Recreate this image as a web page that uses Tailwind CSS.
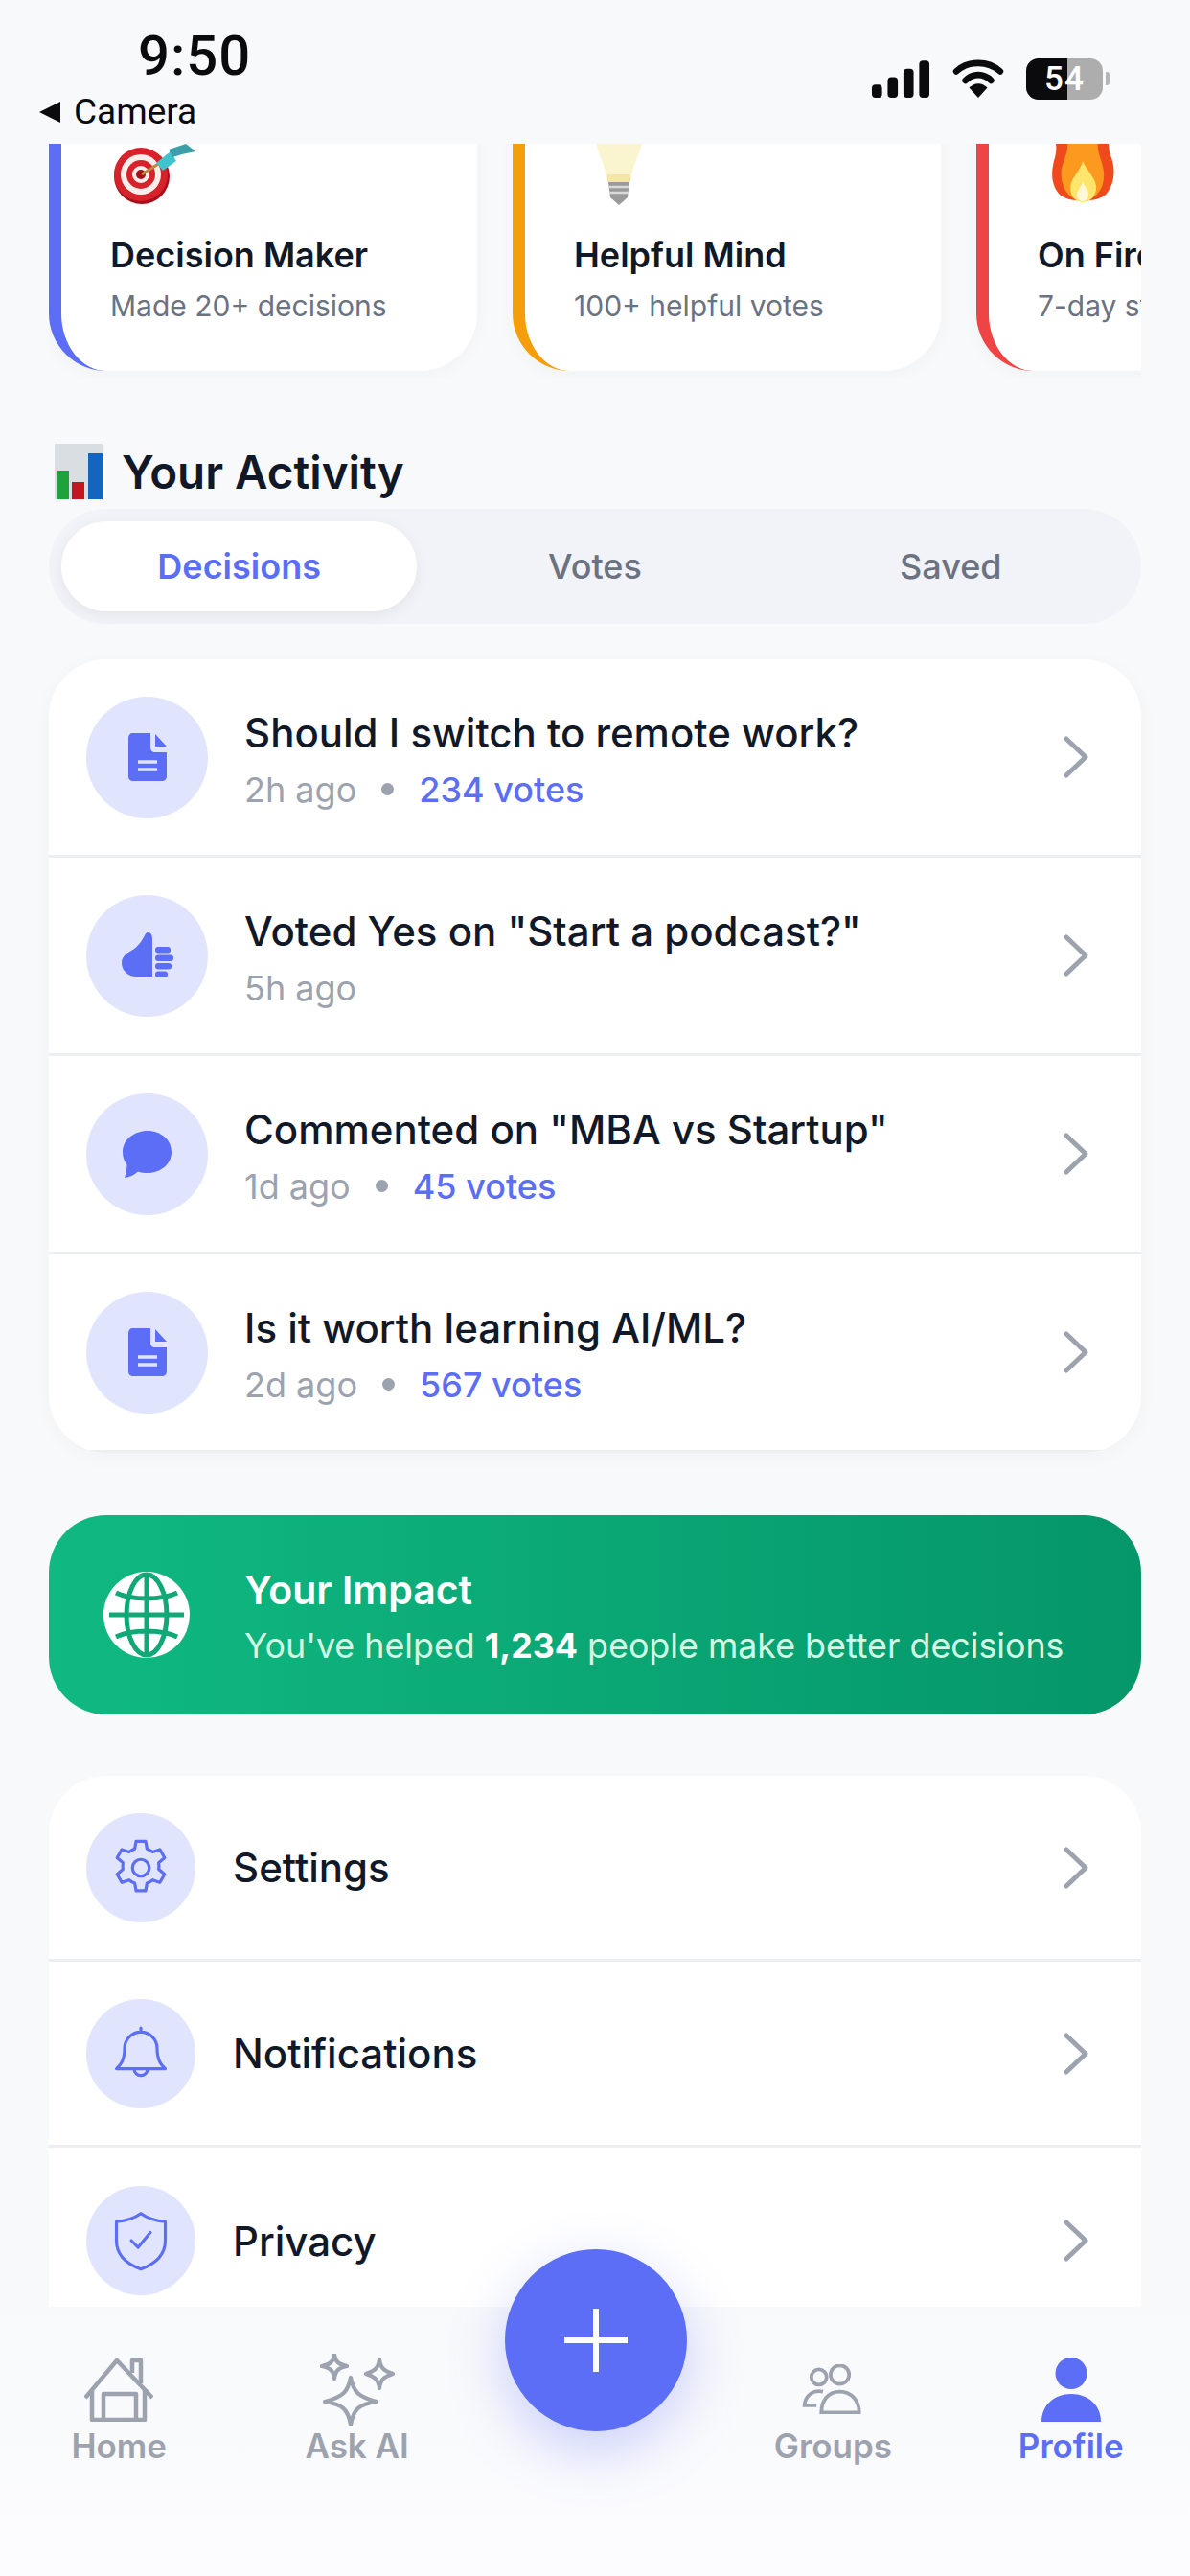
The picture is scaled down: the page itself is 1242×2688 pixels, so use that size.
<!DOCTYPE html>
<html>
<head>
<meta charset="utf-8">
<script src="https://cdn.jsdelivr.net/npm/@tailwindcss/browser@4"></script>
</head>
<body class="m-0">
<div class="relative w-[1242px] h-[2688px] overflow-hidden bg-[#f8f9fb] font-['Inter',sans-serif] text-[#111827] flex flex-col">

  <!-- status bar -->
  <header class="h-[150px] shrink-0 relative flex justify-between">
    <div class="pl-[40px] pt-[28px]">
      <div class="pl-[104px] text-[58px] leading-[60px] font-medium font-['Roboto',sans-serif] text-[#0b0b0d] tracking-[1px]">9:50</div>
      <div class="flex items-center gap-[13px] mt-[7px] text-[37px] leading-[44px] font-['Roboto',sans-serif] text-[#0b0b0d]">
        <svg class="w-[24px] h-[24px]" viewBox="0 0 24 24"><path d="M23 1V23L1 12Z" fill="#0b0b0d"/></svg>
        <span>Camera</span>
      </div>
    </div>
    <div class="flex items-center gap-[23px] pr-[84px] pt-[14px] h-[150px]">
      <svg class="w-[62px] h-[39px]" viewBox="0 0 64 40"><rect x="1" y="26" width="11" height="14" rx="4" fill="#0b0b0d"/><rect x="18" y="18" width="11" height="22" rx="4" fill="#0b0b0d"/><rect x="35" y="9" width="11" height="31" rx="4" fill="#0b0b0d"/><rect x="52" y="0" width="11" height="40" rx="4" fill="#0b0b0d"/></svg>
      <svg class="w-[54px] h-[40px]" viewBox="0 0 54 42"><path d="M3 13C16 1 38 1 51 13" fill="none" stroke="#0b0b0d" stroke-width="7" stroke-linecap="round"/><path d="M13 23C21 15 33 15 41 23" fill="none" stroke="#0b0b0d" stroke-width="7" stroke-linecap="round"/><path d="M17 31C23 25 31 25 37 31L27 42Z" fill="#0b0b0d"/></svg>
      <div class="relative w-[80px] h-[43px] rounded-[13px] overflow-hidden bg-[#adadad]">
        <div class="absolute left-0 top-0 h-full w-[43px] bg-[#0b0b0d]"></div>
        <div class="absolute inset-0 flex items-center justify-center text-[35px] font-medium text-white font-['Roboto',sans-serif] leading-none tracking-[1px]">54</div>
      </div>
      <div class="w-[4px] h-[14px] bg-[#b5b5b5] rounded-r-[3px] -ml-[20px]"></div>
    </div>
  </header>

  <main class="flex-1 min-h-0 px-[51px]">
    <!-- achievements -->
    <section class="h-[245px] overflow-hidden flex gap-[37px] items-start">
      <article class="shrink-0 w-[447px] h-[300px] -mt-[63px] rounded-[60px] bg-white border-l-[13px] border-[#5b6ef5] pl-[51px] shadow-[0_4px_20px_rgba(0,0,0,0.03)]">
        <svg class="w-[90px] h-[70px] ml-[3px] mt-[59px]" viewBox="0 0 90 70">
          <circle cx="30" cy="38" r="29" fill="#a90f18"/><circle cx="29" cy="36" r="28" fill="#d8222b"/><circle cx="29" cy="36" r="21" fill="#fbeeea"/><circle cx="29" cy="36" r="15" fill="#d8222b"/><circle cx="29" cy="36" r="9" fill="#fbeeea"/><circle cx="29" cy="36" r="5" fill="#a90f18"/>
          <path d="M30 36L52 22" stroke="#b88a3a" stroke-width="3"/><path d="M45 24L60 12L66 22L52 32Z" fill="#3fc4cf"/><path d="M58 10L76 4L86 12L72 15L62 18Z" fill="#3a9fa8"/>
        </svg>
        <h3 class="mt-[28px] text-[36px] leading-[44px] font-semibold">Decision Maker</h3>
        <p class="mt-[12px] text-[30px] leading-[38px] text-[#6b7280]">Made 20+ decisions</p>
      </article>
      <article class="shrink-0 w-[447px] h-[300px] -mt-[63px] rounded-[60px] bg-white border-l-[13px] border-[#f59e0b] pl-[51px] shadow-[0_4px_20px_rgba(0,0,0,0.03)]">
        <svg class="w-[60px] h-[70px] ml-[23px] mt-[59px]" viewBox="0 0 60 70">
          <path d="M0 0H48C48 12 39 22 36 44H12C9 22 0 12 0 0Z" fill="#fbf5cf"/><path d="M12 36H36V44H12Z" fill="#f3e6a8"/><path d="M13 44H35L33 60L24 68L15 60Z" fill="#9a9a9a"/><path d="M13 49H35M14 55H34" stroke="#d9d9d9" stroke-width="2.500"/>
        </svg>
        <h3 class="mt-[28px] text-[36px] leading-[44px] font-semibold">Helpful Mind</h3>
        <p class="mt-[12px] text-[30px] leading-[38px] text-[#6b7280]">100+ helpful votes</p>
      </article>
      <article class="shrink-0 w-[447px] h-[300px] -mt-[63px] rounded-[60px] bg-white border-l-[13px] border-[#ef4444] pl-[51px] shadow-[0_4px_20px_rgba(0,0,0,0.03)]">
        <svg class="w-[70px] h-[70px] ml-[14px] mt-[59px]" viewBox="0 0 70 70">
          <path d="M4 0C6 6 6 12 3 22C0 34 0 46 8 56C16 66 50 66 58 56C66 46 68 30 62 16C60 10 60 4 60 0Z" fill="#ef4a1c"/><path d="M16 0C20 8 14 18 11 30C9 42 14 62 33 64C52 62 58 42 54 28C52 18 46 8 50 0Z" fill="#fb9a1f"/><path d="M33 22C38 34 48 40 47 52C45 62 38 65 33 65C27 65 20 60 20 50C20 40 30 34 33 22Z" fill="#ffe56b"/><path d="M33 44C36 50 40 53 39 58C38 63 35 64 33 64C30 64 27 62 27 58C27 53 31 50 33 44Z" fill="#fff8d8"/>
        </svg>
        <h3 class="mt-[28px] text-[36px] leading-[44px] font-semibold whitespace-nowrap">On Fire</h3>
        <p class="mt-[12px] text-[30px] leading-[38px] text-[#6b7280] whitespace-nowrap">7-day streak</p>
      </article>
    </section>

    <!-- activity heading -->
    <h2 class="flex items-center gap-[20px] pl-[6px] mt-[68px] h-[60px] text-[47.500px] font-semibold leading-none">
      <svg class="w-[50px] h-[58px] -mt-[3px]" viewBox="0 0 50 58"><rect width="50" height="58" fill="#d9dee2"/><rect x="2" y="28" width="13" height="30" fill="#1ea33a"/><rect x="18" y="40" width="13" height="18" fill="#c4161c"/><rect x="35" y="10" width="15" height="48" fill="#1565c0"/></svg>
      <span>Your Activity</span>
    </h2>

    <!-- tabs -->
    <div class="mt-[8px] h-[120px] rounded-[60px] bg-[#f1f3f9] p-[13px] grid grid-cols-3 text-[36px] font-medium text-[#6b7280]">
      <div class="rounded-[50px] bg-white text-[#5b6ef5] font-semibold flex items-center justify-center shadow-[0_4px_16px_rgba(0,0,0,0.06)]">Decisions</div>
      <div class="flex items-center justify-center">Votes</div>
      <div class="flex items-center justify-center">Saved</div>
    </div>

    <!-- activity list -->
    <section class="mt-[37px] rounded-[60px] bg-white overflow-hidden shadow-[0_4px_20px_rgba(0,0,0,0.03)]">
      <div class="h-[207px] border-b-[3px] border-[#eceef1] flex items-center pl-[39px] pr-[55px]">
        <div class="w-[127px] h-[127px] rounded-full bg-[#e0e5fd] flex items-center justify-center shrink-0">
          <svg class="w-[40px] h-[50px]" viewBox="0 0 40 50"><path d="M4 0H23V15C23 18 25 20 28 20H40V45C40 48 38 50 35 50H5C2 50 0 48 0 45V5C0 2 2 0 4 0Z" fill="#5b6ef5"/><path d="M28 1L40 14H28Z" fill="#5b6ef5"/><path d="M10 30H30M10 38H30" stroke="#e0e5fd" stroke-width="3.500"/></svg>
        </div>
        <div class="ml-[38px] flex-1 pt-[7px]">
          <div class="text-[42px] leading-[48px] font-medium">Should I switch to remote work?</div>
          <div class="mt-[12px] flex items-center text-[36px] leading-[46px] text-[#9ca3af]"><span>2h ago</span><span class="w-[13px] h-[13px] rounded-full bg-[#9ca3af] mx-[26px]"></span><span class="text-[#5b6ef5] font-medium">234 votes</span></div>
        </div>
        <svg class="w-[26px] h-[44px]" viewBox="0 0 26 44"><path d="M3 3L23 22L3 41" fill="none" stroke="#9ca3af" stroke-width="5" stroke-linecap="round" stroke-linejoin="round"/></svg>
      </div>
      <div class="h-[207px] border-b-[3px] border-[#eceef1] flex items-center pl-[39px] pr-[55px]">
        <div class="w-[127px] h-[127px] rounded-full bg-[#e0e5fd] flex items-center justify-center shrink-0">
          <svg class="w-[54px] h-[48px]" viewBox="0 0 54 48"><path d="M27 0C31 0 32 3 32 7V46H15C6 46 0 39 0 32C0 26 4 22 10 19C17 15 21 9 24 3C25 1 26 0 27 0Z" fill="#5b6ef5"/><rect x="35" y="15" width="16" height="6.500" rx="3" fill="#5b6ef5"/><rect x="35" y="23.500" width="19" height="6.500" rx="3" fill="#5b6ef5"/><rect x="35" y="32" width="17" height="6.500" rx="3" fill="#5b6ef5"/><rect x="35" y="40.500" width="13" height="6.500" rx="3" fill="#5b6ef5"/></svg>
        </div>
        <div class="ml-[38px] flex-1 pt-[7px]">
          <div class="text-[42px] leading-[48px] font-medium">Voted Yes on "Start a podcast?"</div>
          <div class="mt-[12px] flex items-center text-[36px] leading-[46px] text-[#9ca3af]"><span>5h ago</span></div>
        </div>
        <svg class="w-[26px] h-[44px]" viewBox="0 0 26 44"><path d="M3 3L23 22L3 41" fill="none" stroke="#9ca3af" stroke-width="5" stroke-linecap="round" stroke-linejoin="round"/></svg>
      </div>
      <div class="h-[207px] border-b-[3px] border-[#eceef1] flex items-center pl-[39px] pr-[55px]">
        <div class="w-[127px] h-[127px] rounded-full bg-[#e0e5fd] flex items-center justify-center shrink-0">
          <svg class="w-[51px] h-[49px]" viewBox="0 0 51 49"><path d="M26 0C40 0 51 9.500 51 22C51 34.500 40 44 26 44C22 44 19 43.500 16 42.500C12 46 7 48.500 2 49C3.500 44.500 4.500 40 4.500 35.500C1.500 32 0 27 0 22C0 9.500 12 0 26 0Z" fill="#5b6ef5"/></svg>
        </div>
        <div class="ml-[38px] flex-1 pt-[7px]">
          <div class="text-[42px] leading-[48px] font-medium">Commented on "MBA vs Startup"</div>
          <div class="mt-[12px] flex items-center text-[36px] leading-[46px] text-[#9ca3af]"><span>1d ago</span><span class="w-[13px] h-[13px] rounded-full bg-[#9ca3af] mx-[26px]"></span><span class="text-[#5b6ef5] font-medium">45 votes</span></div>
        </div>
        <svg class="w-[26px] h-[44px]" viewBox="0 0 26 44"><path d="M3 3L23 22L3 41" fill="none" stroke="#9ca3af" stroke-width="5" stroke-linecap="round" stroke-linejoin="round"/></svg>
      </div>
      <div class="h-[207px] border-b-[3px] border-[#eceef1] flex items-center pl-[39px] pr-[55px]">
        <div class="w-[127px] h-[127px] rounded-full bg-[#e0e5fd] flex items-center justify-center shrink-0">
          <svg class="w-[40px] h-[50px]" viewBox="0 0 40 50"><path d="M4 0H23V15C23 18 25 20 28 20H40V45C40 48 38 50 35 50H5C2 50 0 48 0 45V5C0 2 2 0 4 0Z" fill="#5b6ef5"/><path d="M28 1L40 14H28Z" fill="#5b6ef5"/><path d="M10 30H30M10 38H30" stroke="#e0e5fd" stroke-width="3.500"/></svg>
        </div>
        <div class="ml-[38px] flex-1 pt-[7px]">
          <div class="text-[42px] leading-[48px] font-medium">Is it worth learning AI/ML?</div>
          <div class="mt-[12px] flex items-center text-[36px] leading-[46px] text-[#9ca3af]"><span>2d ago</span><span class="w-[13px] h-[13px] rounded-full bg-[#9ca3af] mx-[26px]"></span><span class="text-[#5b6ef5] font-medium">567 votes</span></div>
        </div>
        <svg class="w-[26px] h-[44px]" viewBox="0 0 26 44"><path d="M3 3L23 22L3 41" fill="none" stroke="#9ca3af" stroke-width="5" stroke-linecap="round" stroke-linejoin="round"/></svg>
      </div>
    </section>

    <!-- impact -->
    <section class="mt-[65px] h-[208px] rounded-[60px] bg-gradient-to-r from-[#10b981] to-[#059669] flex items-center pl-[57px] text-white">
      <svg class="w-[90px] h-[90px] shrink-0" viewBox="0 0 90 90">
        <circle cx="45" cy="45" r="45" fill="#fff"/>
        <g fill="none" stroke="#0fa876" stroke-width="5">
          <ellipse cx="45" cy="45" rx="21" ry="42"/><path d="M45 3V87M6 45H84M13 22C30 30 60 30 77 22M13 68C30 60 60 60 77 68"/>
        </g>
      </svg>
      <div class="ml-[57px] pt-[4px]">
        <div class="text-[41px] leading-[48px] font-semibold">Your Impact</div>
        <div class="mt-[11px] text-[35.800px] leading-[46px] text-[#d1fae5]">You've helped <b class="font-bold text-white">1,234</b> people make better decisions</div>
      </div>
    </section>

    <!-- settings -->
    <section class="mt-[64px] rounded-t-[60px] bg-white overflow-hidden">
      <div class="h-[194px] border-b-[3px] border-[#eceef1] flex items-center pl-[39px] pr-[55px]">
        <div class="w-[114px] h-[114px] rounded-full bg-[#e0e5fd] flex items-center justify-center shrink-0">
          <svg class="w-[70px] h-[70px]" viewBox="0 0 24 24" fill="none" stroke="#5b6ef5" stroke-width="1.100" stroke-linejoin="round"><path d="M10.300 2.500h3.400l.5 2.700a7.500 7.500 0 0 1 2 1.150l2.600-.9 1.700 2.950-2.100 1.800a7.500 7.500 0 0 1 0 2.300l2.100 1.800-1.700 2.950-2.600-.9a7.500 7.500 0 0 1-2 1.150l-.5 2.700h-3.400l-.5-2.700a7.500 7.500 0 0 1-2-1.150l-2.600.9-1.700-2.950 2.100-1.800a7.500 7.500 0 0 1 0-2.300l-2.100-1.800 1.700-2.950 2.600.9a7.500 7.500 0 0 1 2-1.150z"/><circle cx="12" cy="12" r="3"/></svg>
        </div>
        <div class="ml-[39px] flex-1 text-[42px] font-medium">Settings</div>
        <svg class="w-[26px] h-[44px]" viewBox="0 0 26 44"><path d="M3 3L23 22L3 41" fill="none" stroke="#9ca3af" stroke-width="5" stroke-linecap="round" stroke-linejoin="round"/></svg>
      </div>
      <div class="h-[194px] border-b-[3px] border-[#eceef1] flex items-center pl-[39px] pr-[55px]">
        <div class="w-[114px] h-[114px] rounded-full bg-[#e0e5fd] flex items-center justify-center shrink-0">
          <svg class="w-[68px] h-[68px]" viewBox="0 0 24 24" fill="none" stroke="#5b6ef5" stroke-width="1.100" stroke-linecap="round" stroke-linejoin="round"><path d="M12 2.500V4M12 4a6 6 0 0 0-6 6c0 5-2 6.500-3 7.500h18c-1-1-3-2.500-3-7.500a6 6 0 0 0-6-6ZM9.500 17.500a2.500 2.500 0 0 0 5 0"/></svg>
        </div>
        <div class="ml-[39px] flex-1 text-[42px] font-medium">Notifications</div>
        <svg class="w-[26px] h-[44px]" viewBox="0 0 26 44"><path d="M3 3L23 22L3 41" fill="none" stroke="#9ca3af" stroke-width="5" stroke-linecap="round" stroke-linejoin="round"/></svg>
      </div>
      <div class="h-[194px] flex items-center pl-[39px] pr-[55px]">
        <div class="w-[114px] h-[114px] rounded-full bg-[#e0e5fd] flex items-center justify-center shrink-0">
          <svg class="w-[68px] h-[68px]" viewBox="0 0 24 24" fill="none" stroke="#5b6ef5" stroke-width="1.100" stroke-linecap="round" stroke-linejoin="round"><path d="M12 2C14.500 3.800 17.500 4.700 21 5V12C21 17 17.500 20.500 12 22.500C6.500 20.500 3 17 3 12V5C6.500 4.700 9.500 3.800 12 2Z"/><path d="M8.500 12L11 14.500L15.500 9"/></svg>
        </div>
        <div class="ml-[39px] flex-1 text-[42px] font-medium">Privacy</div>
        <svg class="w-[26px] h-[44px]" viewBox="0 0 26 44"><path d="M3 3L23 22L3 41" fill="none" stroke="#9ca3af" stroke-width="5" stroke-linecap="round" stroke-linejoin="round"/></svg>
      </div>
    </section>
  </main>

  <!-- bottom nav -->
  <nav class="absolute left-0 right-0 bottom-0 h-[281px] bg-gradient-to-b from-[#f8f9fb] to-[#fcfcfe] text-[35px] font-semibold text-[#9ca3af] leading-none">
    <div class="grid grid-cols-5 h-[163px]">
      <div class="flex flex-col items-center justify-end">
        <svg class="w-[72px] h-[67px]" viewBox="0 0 72 67" fill="none" stroke="#9ca3af" stroke-width="4.500" stroke-linejoin="round"><path d="M1 42L34 3L71 42"/><path d="M50 16V3H59V27"/><path d="M8 34V65H63V34"/><path d="M20 65V38H54V65"/></svg>
        <span class="mt-[8px]">Home</span>
      </div>
      <div class="flex flex-col items-center justify-end">
        <svg class="w-[78px] h-[75px]" viewBox="0 0 78 75" fill="none" stroke="#9ca3af" stroke-width="4.200" stroke-linejoin="round"><path d="M32 25C35 40 40 45 59 50C40 53 35 58 32 74C29 58 24 53 5 50C24 45 29 40 32 25Z"/><path d="M15 1C16 8 19 11 28 13C19 15 16 18 15 26C14 18 11 15 2 13C11 11 14 8 15 1Z"/><path d="M62 6C63 15 67 18 76 21C67 24 63 27 62 36C61 27 57 24 48 21C57 18 61 15 62 6Z"/></svg>
        <span class="mt-[4px]">Ask AI</span>
      </div>
      <div></div>
      <div class="flex flex-col items-center justify-end">
        <svg class="w-[72px] h-[52px]" viewBox="0 0 72 62" fill="none" stroke="#9ca3af" stroke-width="4.500"><circle cx="19" cy="16" r="9.500"/><circle cx="45" cy="13" r="11.500"/><path d="M22 60H69C69 46 60 34 45 34C30 34 22 46 22 60Z"/><path d="M24 34C12 32 2 38 1 51H16"/></svg>
        <span class="mt-[16px]">Groups</span>
      </div>
      <div class="flex flex-col items-center justify-end text-[#5b6ef5]">
        <svg class="w-[62px] h-[67px]" viewBox="0 0 62 67" fill="#5b6ef5"><ellipse cx="31" cy="16.500" rx="16.500" ry="16.500"/><path d="M0 67C0 50 13 38 31 38C49 38 62 50 62 67Z"/></svg>
        <span class="mt-[8px]">Profile</span>
      </div>
    </div>
    <div class="absolute left-[527px] -top-[60px] w-[190px] h-[190px] rounded-full bg-[#5b6ef5] flex items-center justify-center shadow-[0_20px_60px_rgba(91,110,245,0.3)]">
      <svg class="w-[66px] h-[66px]" viewBox="0 0 66 66"><path d="M33 1V65M1 33H65" stroke="#fff" stroke-width="6" stroke-linecap="round"/></svg>
    </div>
  </nav>
</div>
</body>
</html>
